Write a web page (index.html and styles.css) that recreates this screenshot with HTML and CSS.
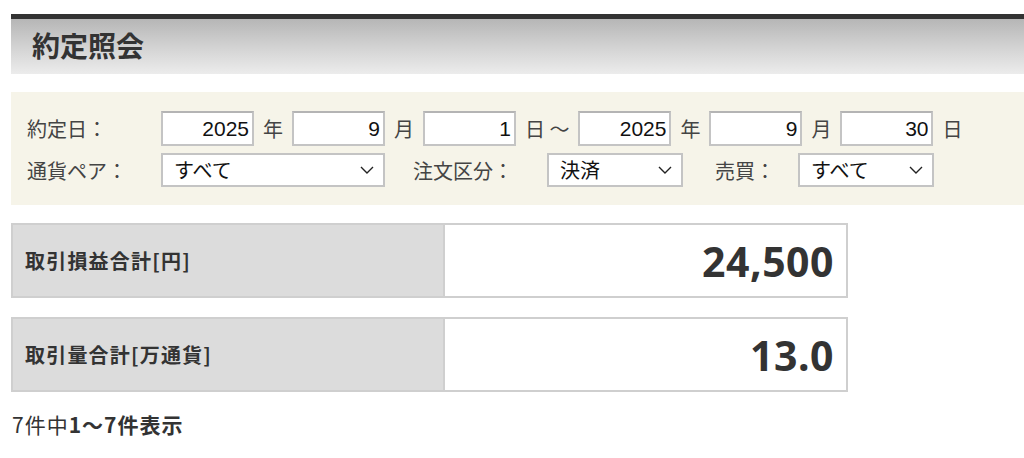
FILE: index.html
```html
<!DOCTYPE html>
<html lang="ja">
<head>
<meta charset="utf-8">
<title>約定照会</title>
<link rel="stylesheet" href="styles.css">
</head>
<body>
<div class="page">
  <h1 class="title">約定照会</h1>

  <form class="filter">
    <div class="row">
      <span class="label">約定日：</span>
      <input class="num" type="text" value="2025"><span class="unit">年</span>
      <input class="num" type="text" value="9"><span class="unit">月</span>
      <input class="num" type="text" value="1"><span class="unit">日 ～</span>
      <input class="num" type="text" value="2025"><span class="unit">年</span>
      <input class="num" type="text" value="9"><span class="unit">月</span>
      <input class="num" type="text" value="30"><span class="unit">日</span>
    </div>
    <div class="row">
      <span class="label">通貨ペア：</span>
      <span class="sel sel-wide">
        <select><option>すべて</option></select>
        <svg class="chev" viewBox="0 0 14 8" width="14" height="8"><path d="M1 1l6 6 6-6" fill="none" stroke="#222" stroke-width="1.4"/></svg>
      </span>
      <span class="label2 l-order">注文区分：</span>
      <span class="sel">
        <select><option>決済</option></select>
        <svg class="chev" viewBox="0 0 14 8" width="14" height="8"><path d="M1 1l6 6 6-6" fill="none" stroke="#222" stroke-width="1.4"/></svg>
      </span>
      <span class="label2 l-side">売買：</span>
      <span class="sel">
        <select><option>すべて</option></select>
        <svg class="chev" viewBox="0 0 14 8" width="14" height="8"><path d="M1 1l6 6 6-6" fill="none" stroke="#222" stroke-width="1.4"/></svg>
      </span>
    </div>
  </form>

  <div class="summary">
    <div class="sum-label">取引損益合計[円]</div>
    <div class="sum-value">24,500</div>
  </div>
  <div class="summary">
    <div class="sum-label">取引量合計[万通貨]</div>
    <div class="sum-value">13.0</div>
  </div>

  <p class="count">7件中<b>1～7件表示</b></p>
</div>
</body>
</html>
```

FILE: styles.css
```css
* { box-sizing: border-box; }
html, body { margin: 0; padding: 0; background: #fff; }
body {
  font-family: "Noto Sans CJK JP", "Noto Sans", sans-serif;
  color: #333;
}
.page {
  padding: 14px 0 0 11px;
}
.title {
  margin: 0;
  height: 60px;
  border-top: 5px solid #333;
  background: linear-gradient(to bottom, #b6b6b6 0%, #d2d2d2 50%, #ececec 100%);
  font-size: 28px;
  font-weight: 700;
  line-height: 53px;
  padding-left: 21px;
  color: #333;
}
.filter {
  margin-top: 18px;
  background: #f6f4e9;
  padding: 19px 0 18px 16px;
  display: flex;
  flex-direction: column;
  gap: 8px;
}
.row {
  display: flex;
  align-items: center;
  height: 34px;
}
.label {
  width: 134px;
  font-size: 20px;
  color: #444;
}
.label2 {
  font-size: 20px;
  color: #444;
}
.l-order { margin-left: 28px; width: 134px; }
.l-side { margin-left: 32px; width: 83px; }
.unit {
  font-size: 20px;
  color: #444;
  padding: 0 9px;
  white-space: pre;
}
.num {
  width: 93px;
  height: 35px;
  border: 2px solid #c4c4c4;
  border-top-color: #b4b4b4;
  background: #fff;
  font-family: "Liberation Sans", Arial, sans-serif;
  font-size: 21px;
  color: #111;
  text-align: right;
  padding: 2px 3px 0 4px;
  margin: 0;
  outline: none;
}
.sel {
  position: relative;
  display: inline-block;
  width: 136px;
  height: 34px;
}
.sel-wide { width: 224px; }
.sel select {
  appearance: none;
  -webkit-appearance: none;
  width: 100%;
  height: 100%;
  border: 2px solid #c4c4c4;
  background: #fff;
  font-family: "Noto Sans CJK JP", sans-serif;
  font-size: 20px;
  color: #111;
  padding: 0 0 0 11px;
  margin: 0;
  border-radius: 0;
  line-height: 30px;
}
.chev {
  position: absolute;
  right: 11px;
  top: 13px;
  pointer-events: none;
}
.summary {
  margin-top: 18px;
  width: 837px;
  height: 75px;
  display: flex;
  border: 2px solid #cfcfcf;
}
.summary + .summary { margin-top: 19px; }
.sum-label {
  width: 432px;
  background: #dcdcdc;
  border-right: 2px solid #cfcfcf;
  font-size: 20px;
  letter-spacing: 1.2px;
  font-weight: 700;
  display: flex;
  align-items: center;
  padding-left: 12px;
  color: #333;
}
.sum-value {
  flex: 1;
  background: #fff;
  font-family: "Noto Sans", sans-serif;
  font-size: 41px;
  font-weight: 700;
  letter-spacing: 0.5px;
  color: #333;
  display: flex;
  align-items: center;
  justify-content: flex-end;
  padding-right: 12px;
}
.count {
  margin: 17px 0 0 1px;
  font-size: 21px;
  letter-spacing: 1px;
  color: #333;
}
.count b { font-weight: 700; }
```
